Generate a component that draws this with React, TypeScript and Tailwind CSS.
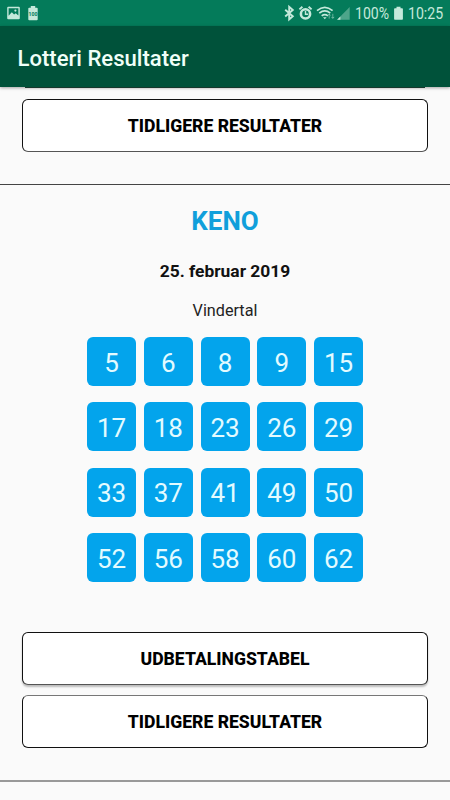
import React from "react";

const numbers = [
  5, 6, 8, 9, 15,
  17, 18, 23, 26, 29,
  33, 37, 41, 49, 50,
  52, 56, 58, 60, 62,
];

const StatusBar: React.FC = () => {
  return (
    <div className="flex h-[26px] items-center justify-between bg-[#047b5a] text-[#c5e9db]">
      <svg className="h-[26px] w-[60px]" viewBox="0 0 60 26" fill="currentColor">
        {/* Picture */}
        <path
          fillRule="evenodd"
          d="M8.2 6.8h10.6q1 0 1 1v10.4q0 1-1 1H8.2q-1 0-1-1V7.8q0-1 1-1zM8.6 8.3v7.4l3.2-3.4 2.3 2.3 1.6-1.4 2.7 2.4V8.3z"
        />
        <circle cx="15.4" cy="10.6" r="1.1" />
        {/* Battery */}
        <path d="M30.8 6h4.4v1.7h1.6q.9 0 .9.9v10.7q0 .9-.9.9h-7.6q-.9 0-.9-.9V8.6q0-.9.9-.9h1.6z" />
        <text x="33" y="16" textAnchor="middle" fontFamily="Roboto, sans-serif" fontSize="5.2" fontWeight="700" fill="#047b5a">
          100
        </text>
      </svg>
      <div className="flex items-center">
        <svg className="h-[26px] w-[80px]" viewBox="275 0 80 26" fill="none" stroke="currentColor">
          {/* Bluetooth */}
          <path d="M285.2 9.8l7.6 6.4-3.6 3.2V6.8l3.6 3.2-7.6 6.4" strokeWidth="1.9" />
          {/* Alarm */}
          <circle cx="305.5" cy="13.9" r="4.6" strokeWidth="2.6" />
          <path d="M305.5 11v3.3h2.6" strokeWidth="1.4" />
          <path d="M299.4 9.4l3-2.7M311.6 9.4l-3-2.7" strokeWidth="1.9" />
          {/* Wifi */}
          <path d="M317 10.6q7.8-6.6 15.6 0M319.3 13.2q5.5-4.5 11 0M321.7 15.8q3.1-2.5 6.2 0" strokeWidth="1.7" />
          <path d="M323 17.3h3.6l-1.8 2z" fill="currentColor" stroke="none" />
          <path d="M329.2 18.6v-4.4M327.8 15.5l1.4-1.5 1.4 1.5M332.8 13.8v4.4M331.4 16.9l1.4 1.5 1.4-1.5" strokeWidth="1" opacity=".5" />
          {/* Signal */}
          <path d="M349.7 7v12.8h-12.6z" fill="currentColor" stroke="none" opacity=".38" />
          <path d="M340.4 16.5v3.3h-3.3z" fill="currentColor" stroke="none" />
        </svg>
        <div className="w-[39px] pt-[2px]">
          <span className="block origin-left scale-x-[0.88] whitespace-nowrap text-[16px] leading-[22px]">100%</span>
        </div>
        <svg className="h-[26px] w-[14px]" viewBox="394 0 14 26" fill="currentColor">
          <path d="M396.5 6.7h4v1.5h1.6q.8 0 .8.8v10q0 .8-.8.8h-7.2q-.8 0-.8-.8V9q0-.8.8-.8h1.6z" />
        </svg>
        <div className="w-[42px] pt-[2px]">
          <span className="block origin-left scale-x-[0.88] whitespace-nowrap text-[16px] leading-[22px]">10:25</span>
        </div>
      </div>
    </div>
  );
};

const ResultButton: React.FC<{ label: string; className?: string }> = ({ label, className = "" }) => {
  return (
    <button
      className={`flex h-[53px] w-full shrink-0 items-center justify-center rounded-[6px] border border-[#111] bg-white pt-px text-[17.6px] font-extrabold text-black ${className}`}
    >
      {label}
    </button>
  );
};

export default function App() {
  return (
    <div className="flex h-[800px] w-[450px] flex-col overflow-hidden bg-[#fafafa] font-['Roboto',sans-serif]">
      <StatusBar />
      <header className="flex h-[61px] items-center bg-[#00523a] pl-[17.5px] pt-[4px] text-[22.1px] font-medium text-[#f0fff8] shadow-[0_1px_3px_rgba(0,0,0,0.35)]">
        Lotteri Resultater
      </header>

      {/* Previous game, scrolled under the header */}
      <section className="flex h-[98px] flex-col border-b border-[#444] px-[22px]">
        <div className="mx-[3px] mb-[11px] h-px shrink-0 bg-[#16382c]" />
        <ResultButton label="TIDLIGERE RESULTATER" className="border-b-[#555]" />
      </section>

      <section className="flex h-[597px] flex-col items-center border-b-2 border-[#999] px-[22px]">
        <h2 className="mt-[18px] text-[26px] font-bold leading-[36px] text-[#109fdb]">KENO</h2>
        <p className="mt-[20px] text-[17.4px] font-bold leading-[24px] text-[#111]">25. februar 2019</p>
        <p className="mt-[16px] text-[16.2px] leading-[24px] text-[#222]">Vindertal</p>

        <div className="mt-[14px] grid w-[276px] grid-cols-[repeat(5,49px)] justify-between gap-y-[16.4px]">
          {numbers.map((n) => (
            <div
              key={n}
              className="flex h-[49px] items-center justify-center rounded-[6px] bg-[#03a4ec] pt-[3px] text-[26px] text-[#e3fbff]"
            >
              {n}
            </div>
          ))}
        </div>

        <div className="mt-[49.8px] flex w-full flex-col gap-[10px]">
          <ResultButton label="UDBETALINGSTABEL" className="border-b-[#555] shadow-[0_2px_2px_rgba(0,0,0,0.25)]" />
          <ResultButton label="TIDLIGERE RESULTATER" className="border-t-[#777]" />
        </div>
      </section>
    </div>
  );
}
